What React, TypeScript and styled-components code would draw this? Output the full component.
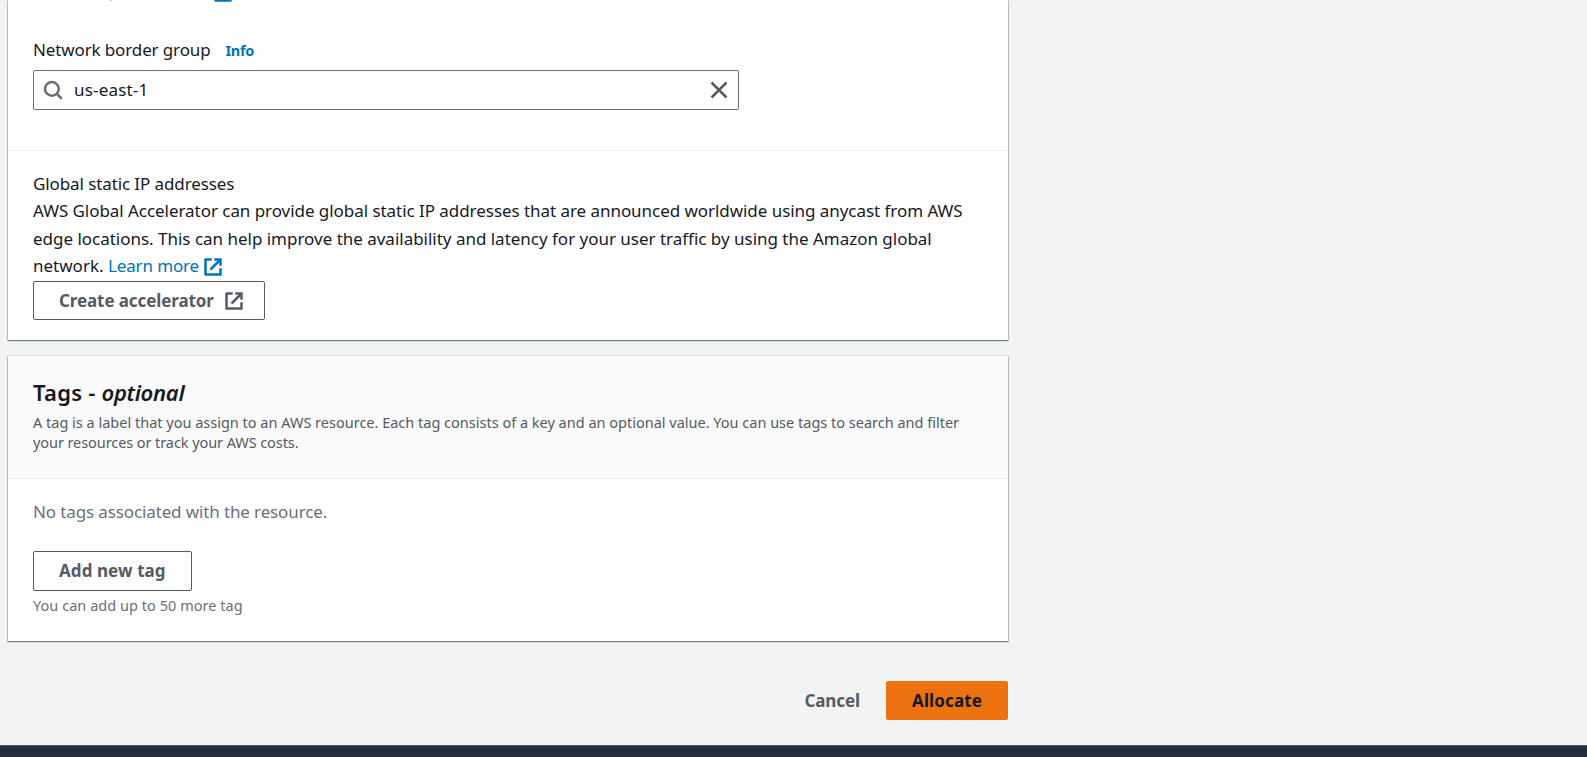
import React from "react";
import styled, { createGlobalStyle, css } from "styled-components";

const GlobalStyle = createGlobalStyle`
  *, *::before, *::after { box-sizing: border-box; }
  html, body { margin: 0; padding: 0; }
  body {
    overflow: hidden;
    background: #f2f3f3;
    color: #16191f;
    font-family: "Noto Sans", "Open Sans", sans-serif;
    font-size: 17px;
    line-height: 27.5px;
  }
`;

const Page = styled.div`
  display: flex;
  flex-direction: column;
  height: 757px;
  overflow: hidden;
`;

const Form = styled.main`
  flex: 1;
  width: 1000px;
  margin-left: 8px;
`;

const Card = styled.section`
  background: #fff;
  box-shadow: 0 1px 1px 0 rgba(0, 28, 36, 0.3), 1px 1px 1px 0 rgba(0, 28, 36, 0.15),
    -1px 1px 1px 0 rgba(0, 28, 36, 0.15), 0 0 0 1px rgba(0, 28, 36, 0.05);
`;

const SettingsCard = styled(Card)`
  height: 340px;
`;

const TagsCard = styled(Card)`
  height: 285px;
  margin-top: 16px;
`;

const NetworkSection = styled.div`
  display: flow-root;
  height: 151px;
  padding: 0 25px;
  border-bottom: 1px solid #eaeded;
`;

const PoolHint = styled.div`
  display: flex;
  align-items: center;
  margin-top: -22px;
  padding-left: 29px;
  height: 27.5px;
  color: #687078;
`;

const Text = styled.span<{ $tracking?: number }>`
  letter-spacing: ${(p) => p.$tracking ?? 0}px;
  white-space: nowrap;
`;

const Link = styled.a`
  color: #0073bb;
  text-decoration: none;
  letter-spacing: -0.13px;
  white-space: nowrap;
`;

const PoolLink = styled(Link)`
  display: flex;
  align-items: center;
  gap: 4px;
  margin-left: 3.5px;

  svg {
    margin-top: 3px;
  }
`;

const LabelRow = styled.div`
  display: flex;
  align-items: baseline;
  gap: 15px;
  height: 27px;
  margin-top: 30.5px;
  line-height: 27px;
`;

const InfoLink = styled(Link)`
  font-size: 14.5px;
  font-weight: 700;
  letter-spacing: -0.3px;
`;

const SearchField = styled.div`
  display: flex;
  align-items: center;
  width: 706px;
  height: 40px;
  margin-top: 7px;
  padding: 0 9px;
  border: 1px solid #687078;
  border-radius: 2px;
`;

const FieldValue = styled.span`
  flex: 1;
  margin-left: 11px;
  letter-spacing: 0.18px;
`;

const IconSvg = styled.svg<{ $inline?: boolean }>`
  flex: none;
  width: 20px;
  height: 20px;
  fill: none;
  stroke: currentColor;
  stroke-width: 2;
  ${(p) =>
    p.$inline &&
    css`
      margin: -4px 0 -4px 4px;
      vertical-align: -1px;
    `}
`;

const SearchIcon = styled(IconSvg)`
  color: #687078;
`;

const CloseIcon = styled(IconSvg)`
  color: #545b64;
`;

const AcceleratorSection = styled.div`
  padding: 18.5px 25px 0;
`;

const Button = styled.button<{ $height?: number; $kind?: "normal" | "link" | "primary" }>`
  display: inline-flex;
  align-items: center;
  gap: 10px;
  height: ${(p) => p.$height ?? 39}px;
  padding: 0 25px 1px;
  border: 1px solid #545b64;
  border-radius: 2px;
  background: #fff;
  color: #545b64;
  font: 700 17px/27px "Noto Sans", "Open Sans", sans-serif;
  white-space: nowrap;
  ${(p) =>
    p.$kind === "link" &&
    css`
      border-color: transparent;
      background: transparent;
    `}
  ${(p) =>
    p.$kind === "primary" &&
    css`
      border-color: #ec7211;
      background: #ec7211;
      color: #16191f;
    `}
`;

const AcceleratorButton = styled(Button)`
  display: flex;
  width: 232px;
  margin-top: 1.5px;
  padding-bottom: 0;
`;

const AddTagButton = styled(Button)`
  display: flex;
  width: 159px;
  margin-top: 26px;
  padding-bottom: 2px;
`;

const AllocateButton = styled(Button)`
  width: 122px;
`;

const TagsHeader = styled.header`
  height: 123px;
  padding: 22px 25px 0;
  background: #fafafa;
  border-bottom: 1px solid #eaeded;
`;

const Title = styled.h2`
  margin: 0;
  font-size: 22px;
  font-weight: 600;
  line-height: 28px;
  letter-spacing: 0.25px;

  em {
    letter-spacing: -0.28px;
  }
`;

const Description = styled.p`
  margin: 6px 0 0;
  color: #545b64;
  font-size: 14.5px;
  line-height: 20px;
`;

const TagsBody = styled.div`
  padding: 19px 25px 0;
`;

const EmptyText = styled.div`
  height: 27px;
  color: #687078;
  line-height: 27px;
`;

const Constraint = styled.div`
  margin-top: 4px;
  color: #687078;
  font-size: 14.5px;
  line-height: 20px;
  letter-spacing: 0.04px;
`;

const Actions = styled.div`
  display: flex;
  justify-content: flex-end;
  margin-top: 40px;
`;

const Footer = styled.footer`
  flex: none;
  height: 12px;
  border-top: 1px solid #545b64;
  background: #232f3e;
`;

const ExternalIcon = ({ inline }: { inline?: boolean }) => (
  <IconSvg viewBox="0 0 16 16" $inline={inline} aria-hidden>
    <path d="M10 2h4v4" strokeLinecap="square" />
    <path d="m6 10 8-8" />
    <path d="M14 9.05V14H2V2h5" strokeLinejoin="round" />
  </IconSvg>
);

export default function App() {
  return (
    <>
      <GlobalStyle />
      <Page>
        <Form>
          <SettingsCard>
            <NetworkSection>
              <PoolHint>
                found)
                <PoolLink>
                  Learn more
                  <ExternalIcon />
                </PoolLink>
              </PoolHint>
              <LabelRow>
                <Text $tracking={-0.13}>Network border group</Text>
                <InfoLink>Info</InfoLink>
              </LabelRow>
              <SearchField>
                <SearchIcon viewBox="0 0 16 16" aria-hidden>
                  <circle cx="7.1" cy="7.1" r="5.5" />
                  <path d="m10.8 10.8 4.2 4.2" />
                </SearchIcon>
                <FieldValue>us-east-1</FieldValue>
                <CloseIcon viewBox="0 0 16 16" aria-hidden>
                  <path d="m2 2 12 12M14 2 2 14" />
                </CloseIcon>
              </SearchField>
            </NetworkSection>
            <AcceleratorSection>
              <Text $tracking={-0.1}>Global static IP addresses</Text>
              <br />
              <Text $tracking={-0.05}>
                AWS Global Accelerator can provide global static IP addresses that are announced
                worldwide using anycast from AWS
              </Text>
              <br />
              <Text $tracking={-0.015}>
                edge locations. This can help improve the availability and latency for your user
                traffic by using the Amazon global
              </Text>
              <br />
              <Text>network. </Text>
              <Link>
                Learn more
                <ExternalIcon inline />
              </Link>
              <AcceleratorButton>
                <Text $tracking={-0.1}>Create accelerator</Text>
                <ExternalIcon />
              </AcceleratorButton>
            </AcceleratorSection>
          </SettingsCard>

          <TagsCard>
            <TagsHeader>
              <Title>
                Tags - <em>optional</em>
              </Title>
              <Description>
                <Text>
                  A tag is a label that you assign to an AWS resource. Each tag consists of a key and
                  an optional value. You can use tags to search and filter
                </Text>
                <br />
                <Text $tracking={-0.08}>your resources or track your AWS costs.</Text>
              </Description>
            </TagsHeader>
            <TagsBody>
              <EmptyText>
                <Text $tracking={-0.125}>No tags associated with the resource.</Text>
              </EmptyText>
              <AddTagButton $height={40}>
                <Text $tracking={0.08}>Add new tag</Text>
              </AddTagButton>
              <Constraint>You can add up to 50 more tag</Constraint>
            </TagsBody>
          </TagsCard>

          <Actions>
            <Button $kind="link">
              <Text $tracking={-0.1}>Cancel</Text>
            </Button>
            <AllocateButton $kind="primary">
              <Text $tracking={0.12}>Allocate</Text>
            </AllocateButton>
          </Actions>
        </Form>
        <Footer />
      </Page>
    </>
  );
}
